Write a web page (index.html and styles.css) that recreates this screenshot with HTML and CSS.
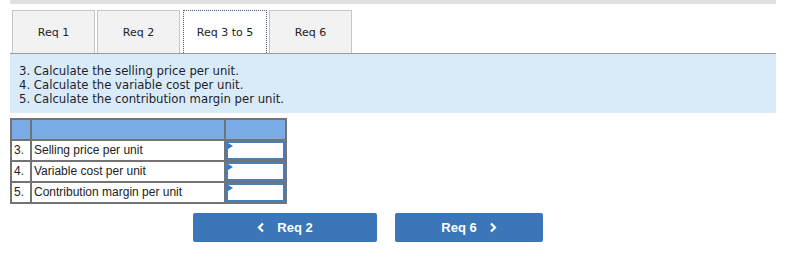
FILE: index.html
```html
<!DOCTYPE html>
<html lang="en">
<head>
  <meta charset="UTF-8">
  <title>Req 3 to 5</title>
  <link rel="stylesheet" href="styles.css">
</head>
<body>
  <div class="wrap">
    <div class="topbar"></div>

    <div class="tabs">
      <div class="tab">Req 1</div>
      <div class="tab">Req 2</div>
      <div class="tab active">Req 3 to 5</div>
      <div class="tab">Req 6</div>
    </div>

    <div class="panel">
      3. Calculate the selling price per unit.<br>
      4. Calculate the variable cost per unit.<br>
      5. Calculate the contribution margin per unit.
    </div>

    <table class="grid">
      <tr class="head">
        <td class="num"></td>
        <td class="label"></td>
        <td class="val"></td>
      </tr>
      <tr>
        <td class="num">3.</td>
        <td class="label">Selling price per unit</td>
        <td class="val"><div class="box"></div></td>
      </tr>
      <tr>
        <td class="num">4.</td>
        <td class="label">Variable cost per unit</td>
        <td class="val"><div class="box"></div></td>
      </tr>
      <tr>
        <td class="num">5.</td>
        <td class="label">Contribution margin per unit</td>
        <td class="val"><div class="box"></div></td>
      </tr>
    </table>

    <div class="nav">
      <button class="btn prev">
        <svg width="8" height="11" viewBox="0 0 8 11"><path d="M6 1.5 L2 5.5 L6 9.5" fill="none" stroke="#fff" stroke-width="2.2"/></svg>
        <span>Req 2</span>
      </button>
      <button class="btn next">
        <span>Req 6</span>
        <svg width="8" height="11" viewBox="0 0 8 11"><path d="M2 1.5 L6 5.5 L2 9.5" fill="none" stroke="#fff" stroke-width="2.2"/></svg>
      </button>
    </div>
  </div>
</body>
</html>
```

FILE: styles.css
```css
body {
  margin: 0;
  background: #fff;
  font-family: "DejaVu Sans", Verdana, sans-serif;
  color: #222;
}
.wrap {
  width: 766px;
  margin-left: 10px;
}
.topbar {
  height: 4px;
  background: #e0e0e0;
}
.tabs {
  display: flex;
  gap: 2px;
  margin-top: 6px;
  padding-left: 2px;
  height: 43px;
}
.tab {
  box-sizing: border-box;
  width: 83px;
  height: 43px;
  background: #f2f2f2;
  border: 1px solid #c6c6c6;
  border-bottom: none;
  font-size: 11px;
  line-height: 43px;
  text-align: center;
  color: #222;
}
.tab.active {
  width: 84px;
  margin-left: 1px;
  background: #fff;
  border: 1px dotted #4a5d78;
  border-bottom: none;
}
.panel {
  border-top: 1px solid #9a9a9a;
  background: #d9ebf9;
  padding: 10px 9px 7px;
  font-size: 11.7px;
  line-height: 14px;
  color: #1e1e2a;
}
.grid {
  border-collapse: collapse;
  table-layout: fixed;
  margin-top: 5px;
  font-family: "Liberation Sans", Arial, sans-serif;
  font-size: 12px;
  color: #222;
}
.grid td {
  border: 2px solid #737373;
  height: 19px;
  padding: 0 2px;
  line-height: 19px;
}
.grid .num {
  width: 14px;
}
.grid .label {
  width: 188px;
}
.grid .val {
  width: 59px;
  padding: 0;
  background: #fff;
}
.grid .head td {
  background: #7aade6;
}
.box {
  position: relative;
  box-sizing: border-box;
  height: 19px;
  border: 2px solid #4a7ebb;
  background: #fff;
}
.box::before {
  content: "";
  position: absolute;
  left: 0;
  top: 0;
  border-left: 5px solid #3a76b9;
  border-top: 3px solid transparent;
  border-bottom: 3px solid transparent;
}
.nav {
  display: flex;
  gap: 18px;
  margin-top: 9px;
  padding-left: 183px;
}
.btn {
  display: flex;
  align-items: center;
  justify-content: center;
  gap: 12px;
  height: 29px;
  background: #3b76b9;
  border: none;
  border-radius: 2px;
  color: #fff;
  font-family: "Liberation Sans", Arial, sans-serif;
  font-weight: bold;
  font-size: 13px;
  cursor: pointer;
}
.btn.prev {
  width: 184px;
}
.btn.next {
  width: 148px;
}
```
